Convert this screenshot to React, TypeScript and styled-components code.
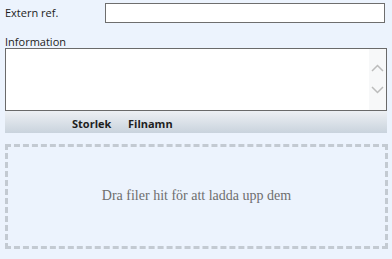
import React from "react";
import styled, { createGlobalStyle } from "styled-components";

const Global = createGlobalStyle`
  html, body { margin: 0; padding: 0; background: #ecf3fd; }
  body { font-family: "Open Sans", "Noto Sans", sans-serif; color: #1a1a1a; }
  * { box-sizing: border-box; }
`;

const Page = styled.div`
  width: 392px;
  height: 259px;
  padding: 3px 4px 0 5px;
  display: flex;
  flex-direction: column;
`;

const FieldRow = styled.div`
  display: flex;
  align-items: center;
  height: 20px;
`;

const Label = styled.label`
  font-size: 11px;
  line-height: 14px;
  color: #1c1c1c;
`;

const InlineLabel = styled(Label)`
  width: 100px;
  flex: none;
`;

const TextInput = styled.input`
  width: 280px;
  height: 20px;
  border: 1px solid #6e6e6e;
  background: #fff;
  padding: 0 3px;
  font: inherit;
  outline: none;
`;

const BlockLabel = styled(Label)`
  display: block;
  margin-top: 11px;
  height: 14px;
  padding-top: 1px;
`;

const AreaBox = styled.div`
  width: 382px;
  height: 63px;
  border: 1px solid #6a6a6a;
  background: #fff;
  display: flex;
`;

const Area = styled.textarea`
  flex: 1;
  border: none;
  resize: none;
  outline: none;
  font: inherit;
  background: transparent;
  overflow: hidden;
`;

const Scroll = styled.div`
  width: 17px;
  background: #f7f8f9;
  display: flex;
  flex-direction: column;
  align-items: center;
  justify-content: center;
  gap: 14px;
  padding-bottom: 1px;
`;

const Header = styled.div`
  width: 382px;
  height: 22px;
  background: linear-gradient(#edf0f4, #c9d3dd);
  display: grid;
  grid-template-columns: 67px 56px 1fr;
  align-items: center;
  padding-top: 2px;
  font-size: 11px;
  font-weight: 700;
  color: #1e1e1e;
`;

const Col = styled.span``;

const Drop = styled.div`
  margin-top: 11px;
  width: 383px;
  height: 105px;
  border: 3px dashed #c3cad2;
  display: flex;
  align-items: center;
  justify-content: center;
  font-family: "Liberation Serif", "Times New Roman", serif;
  font-size: 14px;
  color: #6e6e6e;
  padding-bottom: 1px;
`;

const Chevron = ({ up }: { up?: boolean }) => (
  <svg width="13" height="8" viewBox="0 0 13 8">
    <path
      d={up ? "M1 7 L6.5 1.5 L12 7" : "M1 1 L6.5 6.5 L12 1"}
      fill="none"
      stroke="#bcbcbc"
      strokeWidth="1.5"
    />
  </svg>
);

export default function App() {
  return (
    <>
      <Global />
      <Page>
        <FieldRow>
          <InlineLabel>Extern ref.</InlineLabel>
          <TextInput />
        </FieldRow>
        <BlockLabel>Information</BlockLabel>
        <AreaBox>
          <Area />
          <Scroll>
            <Chevron up />
            <Chevron />
          </Scroll>
        </AreaBox>
        <Header>
          <span />
          <Col>Storlek</Col>
          <Col>Filnamn</Col>
        </Header>
        <Drop>Dra filer hit för att ladda upp dem</Drop>
      </Page>
    </>
  );
}
